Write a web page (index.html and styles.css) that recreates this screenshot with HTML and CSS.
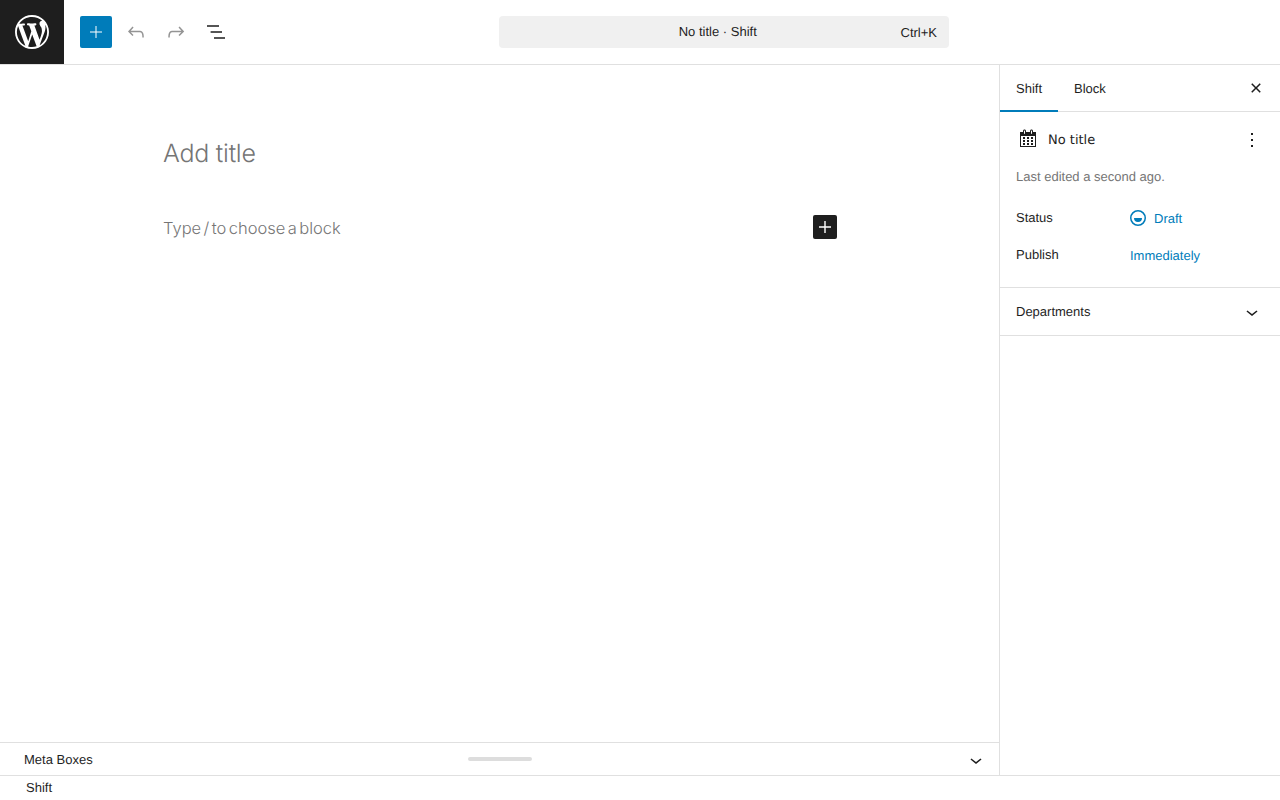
FILE: index.html
```html
<!DOCTYPE html>
<html lang="en">
<head>
<meta charset="utf-8">
<title>Shift</title>
<link rel="stylesheet" href="styles.css">
</head>
<body>
<div class="app">
  <header class="topbar">
    <a class="logo" href="#"><svg width="34" height="34" viewBox="0 0 20 20"><path fill="#fff" d="M20 10c0-5.51-4.49-10-10-10C4.48 0 0 4.49 0 10c0 5.52 4.48 10 10 10 5.51 0 10-4.48 10-10zM7.78 15.37L4.37 6.22c.55-.02 1.17-.08 1.17-.08.5-.06.44-1.13-.06-1.11 0 0-1.45.11-2.37.11-.18 0-.37 0-.58-.01C4.12 2.69 6.87 1.11 10 1.11c2.33 0 4.45.87 6.05 2.34-.68-.11-1.65.39-1.65 1.58 0 .74.45 1.36.9 2.1.35.61.55 1.36.55 2.46 0 1.49-1.4 5-1.4 5l-3.03-8.37c.54-.02.82-.17.82-.17.5-.05.44-1.25-.06-1.22 0 0-1.44.12-2.38.12-.87 0-2.33-.12-2.33-.12-.5-.03-.56 1.2-.06 1.22l.92.08 1.26 3.41zM17.41 10c.24-.64.74-1.87.43-4.25.7 1.29 1.05 2.71 1.05 4.25 0 3.29-1.73 6.24-4.4 7.78.97-2.59 1.94-5.2 2.92-7.78zM6.1 18.09C3.12 16.65 1.11 13.53 1.11 10c0-1.3.23-2.48.72-3.59C3.25 10.3 4.67 14.2 6.1 18.09zm4.03-6.63l2.58 6.98c-.86.29-1.76.45-2.71.45-.79 0-1.57-.11-2.29-.33.81-2.38 1.62-4.74 2.42-7.1z"/></svg></a>
    <div class="tools">
      <button class="btn btn-add"><svg width="24" height="24" viewBox="0 0 24 24"><path fill="#fff" d="M18 11.5h-5.500V6h-1v5.500H6v1h5.500V18h1v-5.500H18z"/></svg></button>
      <button class="btn"><svg width="24" height="24" viewBox="0 0 24 24"><path fill="#949494" d="M18.3 11.7c-.6-.6-1.4-.9-2.3-.9H6.7l2.9-3.3-1.1-1-4.5 5L8.5 16l1-1-2.7-2.7H16c.5 0 .9.2 1.3.5 1 1 1 3.4 1 4.5v.3h1.5v-.2c0-1.5 0-4.3-1.5-5.7z"/></svg></button>
      <button class="btn"><svg width="24" height="24" viewBox="0 0 24 24"><path fill="#949494" d="M15.6 6.5l-1.1 1 2.9 3.3H8c-.9 0-1.7.3-2.3.9-1.4 1.5-1.4 4.2-1.4 5.6v.2h1.5v-.3c0-1.1 0-3.5 1-4.5.3-.3.7-.5 1.3-.5h9.2L14.5 15l1.1 1.1 4.6-4.6-4.6-5z"/></svg></button>
      <button class="btn"><svg width="24" height="24" viewBox="0 0 24 24"><path fill="#1e1e1e" d="M15 5.2H3v1.500h12V5.2zm-5 12v1.500h11v-1.500H10zm8-6H6.600v1.500H18v-1.500z"/></svg></button>
    </div>
    <div class="command">
      <span class="command-title">No title · Shift</span>
      <span class="command-key">Ctrl+K</span>
    </div>
  </header>
  <main class="main">
    <section class="editor">
      <div class="canvas">
        <div class="post-title">Add title</div>
        <div class="block-row">
          <span class="block-hint">Type / to choose a block</span>
          <button class="block-add"><svg width="24" height="24" viewBox="0 0 24 24"><path fill="#fff" d="M18 11.300h-5.300V6h-1.400v5.300H6v1.400h5.300V18h1.400v-5.300H18z"/></svg></button>
        </div>
      </div>
      <div class="metabar">
        <span class="metabar-label">Meta Boxes</span>
        <span class="metabar-handle"></span>
        <svg class="metabar-chevron" width="24" height="24" viewBox="0 0 24 24"><path fill="#1e1e1e" d="M17.500 11.600L12 16l-5.500-4.400.9-1.200L12 14l4.500-3.600 1 1.200z"/></svg>
      </div>
    </section>
    <aside class="sidebar">
      <div class="tabs">
        <span class="tab tab-active">Shift</span>
        <span class="tab">Block</span>
        <svg class="tabs-close" width="24" height="24" viewBox="0 0 24 24"><path fill="#1e1e1e" d="M12 13.060l3.712 3.713 1.061-1.060L13.061 12l3.712-3.712-1.060-1.060L12 10.938 8.288 7.227l-1.061 1.060L10.939 12l-3.712 3.712 1.060 1.061L12 13.061z"/></svg>
      </div>
      <div class="panel">
        <div class="doc-head">
          <svg class="doc-icon" width="20" height="20" viewBox="0 0 20 20"><path fill="#1e1e1e" d="M15 4h3v15H2V4h3V3c0-.41.15-.76.44-1.060.29-.29.65-.44 1.060-.44s.77.15 1.060.44c.29.3.44.65.44 1.060v1h4V3c0-.41.15-.76.44-1.060.29-.29.65-.44 1.060-.44s.77.15 1.060.44c.29.3.44.65.44 1.060v1zM6 3v2.500c0 .14.05.26.15.36.09.09.21.14.35.14s.26-.05.35-.14c.1-.1.15-.22.15-.36V3c0-.14-.05-.26-.15-.35-.09-.1-.21-.15-.35-.15s-.26.05-.35.15c-.1.09-.15.21-.15.35zm7 0v2.500c0 .14.05.26.14.36.1.09.22.14.36.14s.26-.05.36-.14c.09-.1.14-.22.14-.36V3c0-.14-.05-.26-.14-.35-.1-.1-.22-.15-.36-.15s-.26.05-.36.15c-.09.09-.14.21-.14.35zm4 15V8H3v10h14zM7 9v2H5V9h2zm2 0h2v2H9V9zm4 2V9h2v2h-2zm-6 1v2H5v-2h2zm2 0h2v2H9v-2zm4 2v-2h2v2h-2zm-6 1v2H5v-2h2zm4 2H9v-2h2v2zm4 0h-2v-2h2v2z"/></svg>
          <span class="doc-title">No title</span>
          <svg class="doc-more" width="24" height="24" viewBox="0 0 24 24"><path fill="#1e1e1e" d="M13 19h-2v-2h2v2zm0-6h-2v-2h2v2zm0-6h-2V5h2v2z"/></svg>
        </div>
        <p class="doc-edited">Last edited a second ago.</p>
        <div class="field">
          <span class="field-label">Status</span>
          <span class="field-value"><svg width="24" height="24" viewBox="0 0 24 24" class="field-icon"><path fill="#007cba" fill-rule="evenodd" clip-rule="evenodd" d="M12 18.500a6.500 6.500 0 1 1 0-13 6.500 6.500 0 0 1 0 13ZM4 12a8 8 0 1 1 16 0 8 8 0 0 1-16 0Zm8 4a4 4 0 0 0 4-4H8a4 4 0 0 0 4 4Z"/></svg>Draft</span>
        </div>
        <div class="field">
          <span class="field-label">Publish</span>
          <span class="field-value">Immediately</span>
        </div>
      </div>
      <div class="panel-row">
        <span>Departments</span>
        <svg class="row-chevron" width="24" height="24" viewBox="0 0 24 24"><path fill="#1e1e1e" d="M17.500 11.600L12 16l-5.500-4.400.9-1.200L12 14l4.500-3.600 1 1.200z"/></svg>
      </div>
    </aside>
  </main>
  <footer class="statusbar">Shift</footer>
</div>
</body>
</html>
```
FILE: styles.css
```css
* { box-sizing: border-box; }
html, body { margin: 0; height: 100%; overflow: hidden; background: #fff; }
body { font: 13px/1.4 "Liberation Sans", Arial, sans-serif; color: #1e1e1e; text-rendering: geometricPrecision; }
svg { display: block; flex: none; }
button { border: 0; background: none; padding: 0; margin: 0; display: flex; align-items: center; justify-content: center; }

.app { display: flex; flex-direction: column; height: 800px; }

.topbar { flex: none; height: 65px; display: flex; align-items: flex-start; border-bottom: 1px solid #e0e0e0; }
.logo { width: 64px; height: 64px; background: #1e1e1e; display: flex; align-items: center; justify-content: center; }
.tools { display: flex; align-items: center; gap: 8px; padding: 16px 0 0 16px; }
.btn { width: 32px; height: 32px; border-radius: 2px; }
.btn-add { background: #007cba; }
.command { margin: 16px 0 0 267px; width: 450px; height: 32px; border-radius: 4px; background: #f0f0f0; display: grid; grid-template-columns: 1fr auto; align-items: center; padding: 0 12px; }
.command-title { text-align: center; padding-left: 24px; line-height: 30px; margin-bottom: 2px; }
.command-key { line-height: 33px; }

.main { flex: 1; display: flex; min-height: 0; }
.editor { flex: 1; min-width: 0; display: flex; flex-direction: column; }
.canvas { flex: 1; padding: 71px 162px 0 163px; }
.post-title { font: 300 25px/36px Inter, sans-serif; letter-spacing: -0.25px; color: #757575; }
.block-row { display: flex; justify-content: space-between; align-items: center; margin-top: 43px; }
.block-hint { font: 300 16.5px/26px Inter, sans-serif; word-spacing: -2.2px; color: #757575; }
.block-add { width: 24px; height: 24px; background: #1e1e1e; border-radius: 2px; margin-top: -2px; }

.metabar { flex: none; height: 33px; border-top: 1px solid #e0e0e0; display: grid; grid-template-columns: 1fr 64px 1fr; align-items: center; padding: 0 24px; }
.metabar-label { line-height: 33px; }
.metabar-handle { height: 4px; border-radius: 2px; background: #ddd; margin-bottom: 2px; }
.metabar-chevron { justify-self: end; margin-right: -13px; }

.sidebar { flex: none; width: 281px; border-left: 1px solid #e0e0e0; display: flex; flex-direction: column; }
.tabs { flex: none; height: 47px; display: flex; align-items: center; border-bottom: 1px solid #e0e0e0; }
.tab { height: 47px; padding: 0 16px; line-height: 47px; }
.tab-active { box-shadow: inset 0 -2px 0 #007cba; width: 58px; }
.tabs-close { margin-left: auto; margin-right: 12px; }

.panel { flex: none; height: 176px; padding: 16px 16px 0; border-bottom: 1px solid #e0e0e0; }
.doc-head { display: flex; align-items: center; height: 24px; }
.doc-icon { margin: -4px 10px 0 2px; }
.doc-title { font: 13px/24px "DejaVu Sans", Verdana, sans-serif; padding-top: 1px; height: 25px; margin-top: 1px; }
.doc-more { margin-left: auto; }
.doc-edited { margin: 16px 0 0; color: #757575; line-height: 18px; }
.field { display: grid; grid-template-columns: 114px 1fr; height: 37px; }
.doc-edited + .field { margin-top: 20px; }
.field-label { line-height: 24px; }
.field-value { display: flex; align-items: center; height: 24px; color: #007cba; padding-top: 1px; align-self: start; margin-top: 1px; }
.field-icon { margin: -4px 4px 0 -4px; }

.panel-row { flex: none; height: 48px; padding: 1px 16px 0; display: flex; align-items: center; justify-content: space-between; border-bottom: 1px solid #e0e0e0; }

.statusbar { flex: none; height: 25px; border-top: 1px solid #e0e0e0; padding-left: 26px; line-height: 23px; }
```
